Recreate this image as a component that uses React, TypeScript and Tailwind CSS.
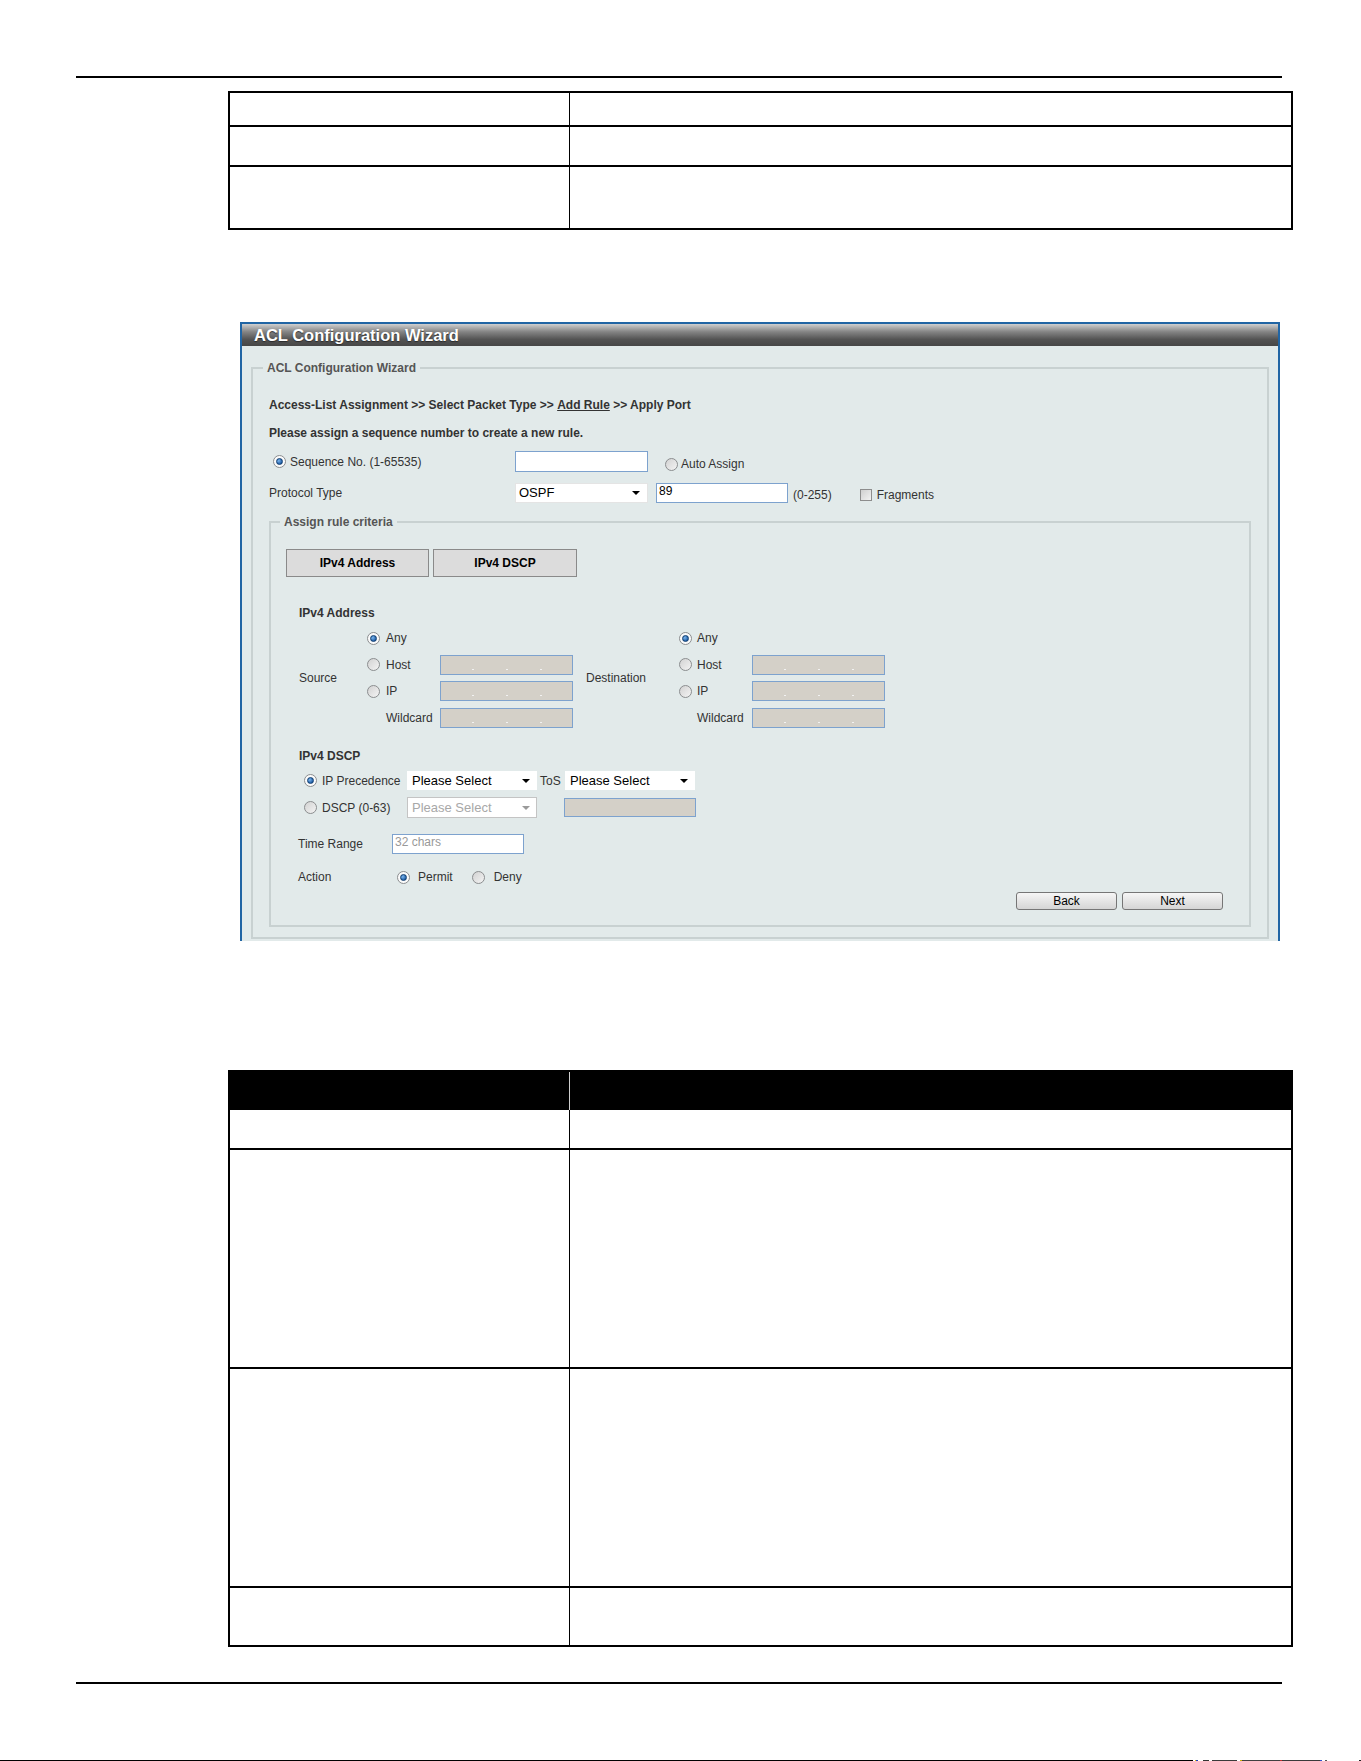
import React from "react";

function Radio({ checked = false }: { checked?: boolean }) {
  return (
    <span
      className={`inline-flex h-[13px] w-[13px] shrink-0 items-center justify-center rounded-full border border-[#8b8d8f] ${
        checked ? "bg-[#fbfbfb]" : "bg-gradient-to-br from-[#d2d2d2] to-[#f4f4f4]"
      }`}
    >
      {checked && (
        <span className="h-[7px] w-[7px] rounded-full border border-[#0f3d70] bg-[radial-gradient(circle_at_35%_35%,#7cb6ee,#1b5aa2_75%)]" />
      )}
    </span>
  );
}

function Caret({ muted = false }: { muted?: boolean }) {
  return (
    <span
      className={`h-0 w-0 border-x-[4px] border-t-[4px] border-x-transparent ${
        muted ? "border-t-[#9a9a9a]" : "border-t-black"
      }`}
    />
  );
}

function IpBox() {
  // gray, read-only address field with its three octet separators
  return (
    <div className="flex h-[20px] w-[133px] items-end gap-[32px] border border-[#7da2ce] bg-[#d4d0c8] pb-[4px] pl-[31px]">
      <span className="h-[1px] w-[2px] bg-[#f2f2f2]" />
      <span className="h-[1px] w-[2px] bg-[#f2f2f2]" />
      <span className="h-[1px] w-[2px] bg-[#f2f2f2]" />
    </div>
  );
}

function TRow({ hClass, last = false, dark = false }: { hClass: string; last?: boolean; dark?: boolean }) {
  return (
    <div className={`flex ${hClass} ${last ? "" : "border-b-2 border-black"} ${dark ? "bg-black" : ""}`}>
      <div className={`w-[340px] border-r ${dark ? "border-[#cfcfcf]" : "border-black"}`} />
      <div className="flex-1" />
    </div>
  );
}

function AddrRow({
  hClass,
  radio,
  checked = false,
  label,
  box = true,
  labelW,
}: {
  hClass: string;
  radio: boolean;
  checked?: boolean;
  label: string;
  box?: boolean;
  labelW: string;
}) {
  return (
    <div className={`flex items-center ${hClass}`}>
      {radio ? <Radio checked={checked} /> : <span className="w-[13px]" />}
      <span className={`${labelW} whitespace-nowrap`}>{label}</span>
      {box && <IpBox />}
    </div>
  );
}

function SmallButton({ children }: { children: React.ReactNode }) {
  return (
    <button className="flex h-[18px] w-[101px] items-center justify-center rounded-[3px] border border-[#767676] bg-gradient-to-b from-[#f6f6f6] to-[#d5d5d5] text-[12px] leading-none text-black">
      {children}
    </button>
  );
}

export default function App() {
  return (
    <div className="flex h-[1761px] w-[1361px] flex-col overflow-hidden bg-white font-['Liberation_Sans',Arial,sans-serif]">
      {/* page header rule */}
      <div className="ml-[76px] mt-[76px] h-[2px] w-[1206px] bg-black" />

      {/* upper parameter table */}
      <div className="ml-[228px] mt-[13px] flex w-[1065px] flex-col border-2 border-black">
        <TRow hClass="h-[34px]" />
        <TRow hClass="h-[40px]" />
        <TRow hClass="h-[61px]" last />
      </div>

      {/* wizard window */}
      <div className="ml-[240px] mt-[92px] w-[1040px] border-x-2 border-t-2 border-[#2165a4]">
        <div className="flex h-[22px] items-center bg-[linear-gradient(to_bottom,#d0d0d0_0%,#858585_35%,#535353_70%,#474747_100%)] pl-[12px]">
          <span className="text-[16.5px] font-bold leading-none text-white [text-shadow:0_1px_1px_#2a2a2a]">
            ACL Configuration Wizard
          </span>
        </div>

        <div className="bg-[#e2eaea] px-[9px] pb-[2px] pt-[15px] text-[12px] text-[#333]">
          <fieldset className="border-2 border-[#c8d1d1] px-[16px] pb-[10px]">
            <legend className="ml-[-6px] px-[4px] text-[12px] font-bold leading-[14px] text-[#555]">
              ACL Configuration Wizard
            </legend>

            <div className="mt-[21px] flex h-[18px] items-center font-bold">
              Access-List Assignment &gt;&gt; Select Packet Type &gt;&gt;&nbsp;<span className="underline">Add Rule</span>&nbsp;&gt;&gt; Apply Port
            </div>
            <div className="mt-[10px] flex h-[18px] items-center font-bold">
              Please assign a sequence number to create a new rule.
            </div>

            {/* sequence number */}
            <div className="mt-[9px] flex h-[21px] items-center">
              <div className="flex w-[246px] items-center pl-[4px]">
                <Radio checked />
                <span className="ml-[4px]">Sequence No. (1-65535)</span>
              </div>
              <div className="h-[21px] w-[133px] border border-[#7da2ce] bg-white" />
              <div className="ml-[17px] flex items-center pt-[5px]">
                <Radio />
                <span className="ml-[3px]">Auto Assign</span>
              </div>
            </div>

            {/* protocol type */}
            <div className="mt-[10px] flex h-[21px] items-center">
              <div className="w-[246px]">Protocol Type</div>
              <div className="flex h-[20px] w-[133px] items-center justify-between border border-[#e4e4e4] bg-white pl-[3px] pr-[7px] text-[13px] text-black">
                <span>OSPF</span>
                <Caret />
              </div>
              <div className="ml-[8px] h-[20px] w-[132px] border border-[#7da2ce] bg-white pl-[2px] text-[12px] leading-[14px] text-black">
                89
              </div>
              <div className="ml-[5px] flex items-center pt-[4px]">
                <span>(0-255)</span>
                <span className="ml-[28px] h-[12px] w-[12px] border border-[#8d8d8d] bg-gradient-to-br from-[#cfcfcf] to-[#f2f2f2]" />
                <span className="ml-[5px]">Fragments</span>
              </div>
            </div>

            {/* rule criteria */}
            <fieldset className="mt-[12px] border-2 border-[#c8d1d1] pb-[15px]">
              <legend className="ml-[9px] px-[4px] text-[12px] font-bold leading-[14px] text-[#555]">
                Assign rule criteria
              </legend>

              <div className="ml-[15px] mt-[20px] flex gap-[4px]">
                <button className="h-[28px] w-[143px] border border-[#8a8a8a] bg-[#dcdcdc] text-[12px] font-bold text-black">
                  IPv4 Address
                </button>
                <button className="h-[28px] w-[144px] border border-[#8a8a8a] bg-[#dcdcdc] text-[12px] font-bold text-black">
                  IPv4 DSCP
                </button>
              </div>

              <div className="ml-[28px] mt-[27px] flex h-[18px] items-center font-bold">IPv4 Address</div>

              <div className="ml-[28px] mt-[3px] flex">
                <div className="flex w-[68px] items-center">Source</div>
                <div className="flex flex-col">
                  <AddrRow hClass="h-[26px]" radio checked label="Any" box={false} labelW="ml-[6px] w-[54px]" />
                  <AddrRow hClass="h-[27px]" radio label="Host" labelW="ml-[6px] w-[54px]" />
                  <AddrRow hClass="h-[26px]" radio label="IP" labelW="ml-[6px] w-[54px]" />
                  <AddrRow hClass="h-[27px]" radio={false} label="Wildcard" labelW="ml-[6px] w-[54px]" />
                </div>
                <div className="ml-[13px] flex w-[93px] items-center">Destination</div>
                <div className="flex flex-col">
                  <AddrRow hClass="h-[26px]" radio checked label="Any" box={false} labelW="ml-[5px] w-[55px]" />
                  <AddrRow hClass="h-[27px]" radio label="Host" labelW="ml-[5px] w-[55px]" />
                  <AddrRow hClass="h-[26px]" radio label="IP" labelW="ml-[5px] w-[55px]" />
                  <AddrRow hClass="h-[27px]" radio={false} label="Wildcard" labelW="ml-[5px] w-[55px]" />
                </div>
              </div>

              <div className="ml-[28px] mt-[16px] flex h-[18px] items-center font-bold">IPv4 DSCP</div>

              <div className="ml-[33px] mt-[6px] flex h-[19px] items-center">
                <Radio checked />
                <span className="ml-[5px] w-[85px] whitespace-nowrap">IP Precedence</span>
                <div className="flex h-[19px] w-[130px] items-center justify-between border border-white bg-white pl-[4px] pr-[6px] text-[13px] text-black">
                  <span>Please Select</span>
                  <Caret />
                </div>
                <span className="ml-[3px] w-[25px]">ToS</span>
                <div className="flex h-[19px] w-[130px] items-center justify-between border border-white bg-white pl-[4px] pr-[6px] text-[13px] text-black">
                  <span>Please Select</span>
                  <Caret />
                </div>
              </div>

              <div className="ml-[33px] mt-[7px] flex h-[21px] items-center">
                <Radio />
                <span className="ml-[5px] w-[85px] whitespace-nowrap">DSCP (0-63)</span>
                <div className="flex h-[21px] w-[130px] items-center justify-between border border-[#c4c4c4] bg-white pl-[4px] pr-[6px] text-[13px] text-[#a8a8a8]">
                  <span>Please Select</span>
                  <Caret muted />
                </div>
                <div className="ml-[27px] h-[19px] w-[132px] border border-[#7da2ce] bg-[#d4d0c8]" />
              </div>

              <div className="ml-[27px] mt-[16px] flex h-[20px] items-center">
                <span className="w-[94px]">Time Range</span>
                <div className="h-[20px] w-[132px] border border-[#7da2ce] bg-white pl-[2px] text-[12px] leading-[14px] text-[#999]">
                  32 chars
                </div>
              </div>

              <div className="ml-[27px] mt-[13px] flex h-[20px] items-center">
                <span className="w-[99px]">Action</span>
                <Radio checked />
                <span className="ml-[8px]">Permit</span>
                <span className="ml-[19px] flex">
                  <Radio />
                </span>
                <span className="ml-[9px]">Deny</span>
              </div>

              <div className="mt-[5px] flex justify-end gap-[5px] pr-[26px]">
                <SmallButton>Back</SmallButton>
                <SmallButton>Next</SmallButton>
              </div>
            </fieldset>
          </fieldset>
        </div>
      </div>

      {/* lower parameter table */}
      <div className="ml-[228px] mt-[129px] flex w-[1065px] flex-col border-2 border-black">
        <TRow hClass="h-[38px]" dark last />
        <TRow hClass="h-[40px]" />
        <TRow hClass="h-[219px]" />
        <TRow hClass="h-[219px]" />
        <TRow hClass="h-[57px]" last />
      </div>

      {/* page footer rule */}
      <div className="ml-[76px] mt-[35px] h-[2px] w-[1206px] bg-black" />

      {/* edge of the following page */}
      <div className="mt-[76px] flex h-[1px] items-start">
        <div className="h-[1px] w-[1195px] bg-black" />
        <div className="ml-[2px] h-[1px] w-[1px] bg-[#e0c000]" />
        <div className="h-[1px] w-[2px] bg-[#2040c0]" />
        <div className="ml-[5px] h-[1px] w-[6px] bg-[#333]" />
        <div className="ml-[3px] h-[1px] w-[25px] bg-[#3a3a3a]" />
        <div className="ml-[3px] h-[1px] w-[2px] bg-[#d0b000]" />
        <div className="h-[1px] w-[38px] bg-[#404040]" />
        <div className="h-[1px] w-[2px] bg-[#c03030]" />
        <div className="h-[1px] w-[38px] bg-[#3a3a3a]" />
        <div className="h-[1px] w-[2px] bg-[#3050d0]" />
        <div className="ml-[3px] h-[1px] w-[2px] bg-[#555]" />
        <div className="ml-[32px] h-[1px] w-[2px] bg-[#222]" />
      </div>
    </div>
  );
}
